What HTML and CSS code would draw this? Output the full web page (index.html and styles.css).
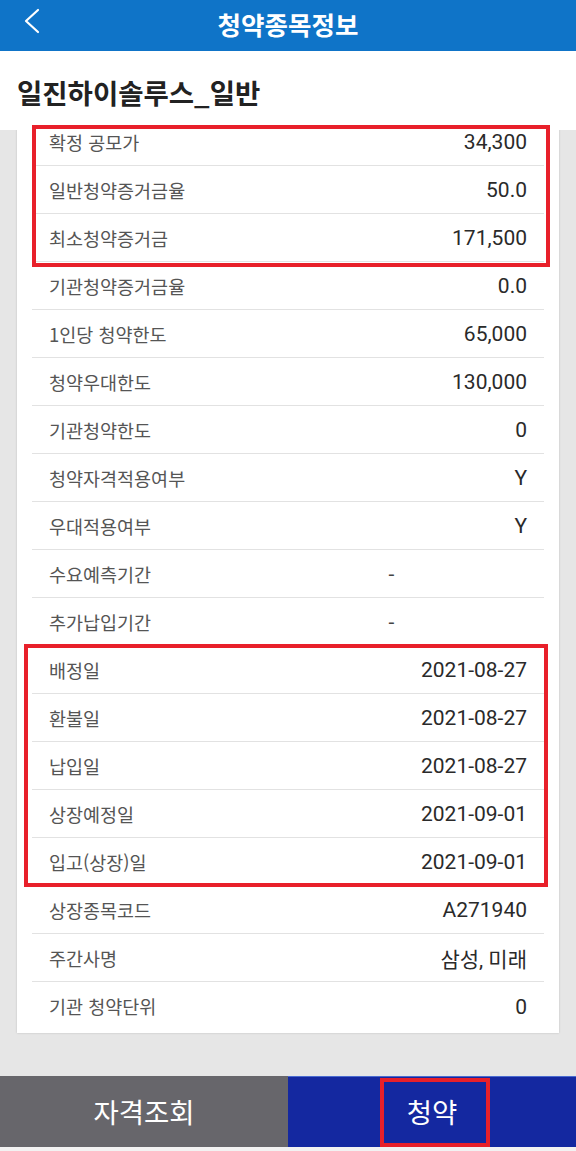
FILE: index.html
```html
<!DOCTYPE html>
<html lang="ko">
<head>
<meta charset="utf-8">
<title>청약종목정보</title>
<link rel="stylesheet" href="styles.css">
</head>
<body>
<div class="app">
  <header class="topbar">
    <svg class="back" width="20" height="26" viewBox="0 0 20 26" aria-hidden="true">
      <path d="M16 2 L4 13 L16 24" fill="none" stroke="#fff" stroke-width="2.2" stroke-linecap="round" stroke-linejoin="round"/>
    </svg>
    <h1 class="topbar-title">청약종목정보</h1>
  </header>
  <div class="titlebar">
    <h2 class="stock-name">일진하이솔루스_일반</h2>
  </div>
  <main class="scroll">
    <div class="card">
      <div class="row"><span class="label">확정 공모가</span><span class="value">34,300</span></div>
      <div class="row"><span class="label">일반청약증거금율</span><span class="value">50.0</span></div>
      <div class="row"><span class="label">최소청약증거금</span><span class="value">171,500</span></div>
      <div class="row"><span class="label">기관청약증거금율</span><span class="value">0.0</span></div>
      <div class="row"><span class="label">1인당 청약한도</span><span class="value">65,000</span></div>
      <div class="row"><span class="label">청약우대한도</span><span class="value">130,000</span></div>
      <div class="row"><span class="label">기관청약한도</span><span class="value">0</span></div>
      <div class="row"><span class="label">청약자격적용여부</span><span class="value">Y</span></div>
      <div class="row"><span class="label">우대적용여부</span><span class="value">Y</span></div>
      <div class="row"><span class="label">수요예측기간</span><span class="value value-range">-</span></div>
      <div class="row"><span class="label">추가납입기간</span><span class="value value-range">-</span></div>
      <div class="row"><span class="label">배정일</span><span class="value">2021-08-27</span></div>
      <div class="row"><span class="label">환불일</span><span class="value">2021-08-27</span></div>
      <div class="row"><span class="label">납입일</span><span class="value">2021-08-27</span></div>
      <div class="row"><span class="label">상장예정일</span><span class="value">2021-09-01</span></div>
      <div class="row"><span class="label">입고(상장)일</span><span class="value">2021-09-01</span></div>
      <div class="row"><span class="label">상장종목코드</span><span class="value">A271940</span></div>
      <div class="row"><span class="label">주간사명</span><span class="value">삼성, 미래</span></div>
      <div class="row"><span class="label">기관 청약단위</span><span class="value">0</span></div>
    </div>
  </main>
  <footer class="actions">
    <button class="btn btn-check" type="button">자격조회</button>
    <button class="btn btn-apply" type="button">청약</button>
  </footer>
  <div class="mark mark-price"></div>
  <div class="mark mark-dates"></div>
  <div class="mark mark-apply"></div>
</div>
</body>
</html>
```

FILE: styles.css
```css
* { box-sizing: border-box; }
html, body { margin: 0; padding: 0; }
body {
  font-family: Roboto, "Noto Sans CJK KR", "Noto Sans", sans-serif;
  background: #ffffff;
  color: #222;
}
.app {
  position: relative;
  width: 576px;
  height: 1151px;
  display: flex;
  flex-direction: column;
  overflow: hidden;
}
.topbar {
  position: relative;
  height: 51px;
  flex: 0 0 51px;
  background: #0f74c8;
  display: flex;
  align-items: center;
  justify-content: center;
}
.back {
  position: absolute;
  left: 22px;
  top: 8px;
}
.topbar-title {
  margin: 0;
  font-family: "Noto Sans CJK KR", sans-serif;
  font-size: 25.5px;
  font-weight: 700;
  color: #fff;
  line-height: 1;
  padding-bottom: 3px;
}
.titlebar {
  flex: 0 0 79px;
  display: flex;
  align-items: center;
  padding: 5px 0 0 17px;
  background: #fff;
}
.stock-name {
  margin: 0;
  font-family: "Noto Sans CJK KR", sans-serif;
  font-size: 27.5px;
  font-weight: 700;
  color: #222;
  line-height: 1;
}
.scroll {
  flex: 1 1 auto;
  background: #e6e6e6;
  overflow: hidden;
  padding: 0 17px;
}
.card {
  margin-top: -12px;
  background: #fff;
  padding: 0 15px 3px;
  box-shadow: 0 0 2px rgba(0, 0, 0, 0.18);
}
.row {
  height: 48px;
  display: grid;
  grid-template-columns: 1fr 271px;
  align-items: center;
  padding: 0 17px;
  border-bottom: 1px solid #e2e2e2;
}
.row:last-child { border-bottom: none; }
.label {
  font-family: "Noto Sans CJK KR", sans-serif;
  font-size: 18.5px;
  color: #555;
  white-space: nowrap;
}
.value {
  font-size: 21px;
  color: #2a2a2a;
  text-align: right;
  padding-top: 1px;
}
.value-range { text-align: center; color: #444; }
.actions {
  flex: 0 0 75px;
  display: flex;
  padding-bottom: 4px;
  background: #f2f2f2;
}
.btn {
  flex: 1 1 50%;
  border: none;
  margin: 0;
  padding: 0 0 2px;
  font-family: "Noto Sans CJK KR", sans-serif;
  font-size: 27.5px;
  font-weight: 400;
  color: #fff;
  cursor: pointer;
}
.btn-check { background: #67666b; }
.btn-apply { background: #1428a0; border-top: 1px solid #4a6bd0; }
.mark {
  position: absolute;
  border: 4px solid #e8202a;
  pointer-events: none;
}
.mark-price { left: 32px; top: 125px; width: 518px; height: 142px; }
.mark-dates { left: 24px; top: 644px; width: 524px; height: 243px; }
.mark-apply { left: 380px; top: 1078px; width: 110px; height: 69px; }
```
